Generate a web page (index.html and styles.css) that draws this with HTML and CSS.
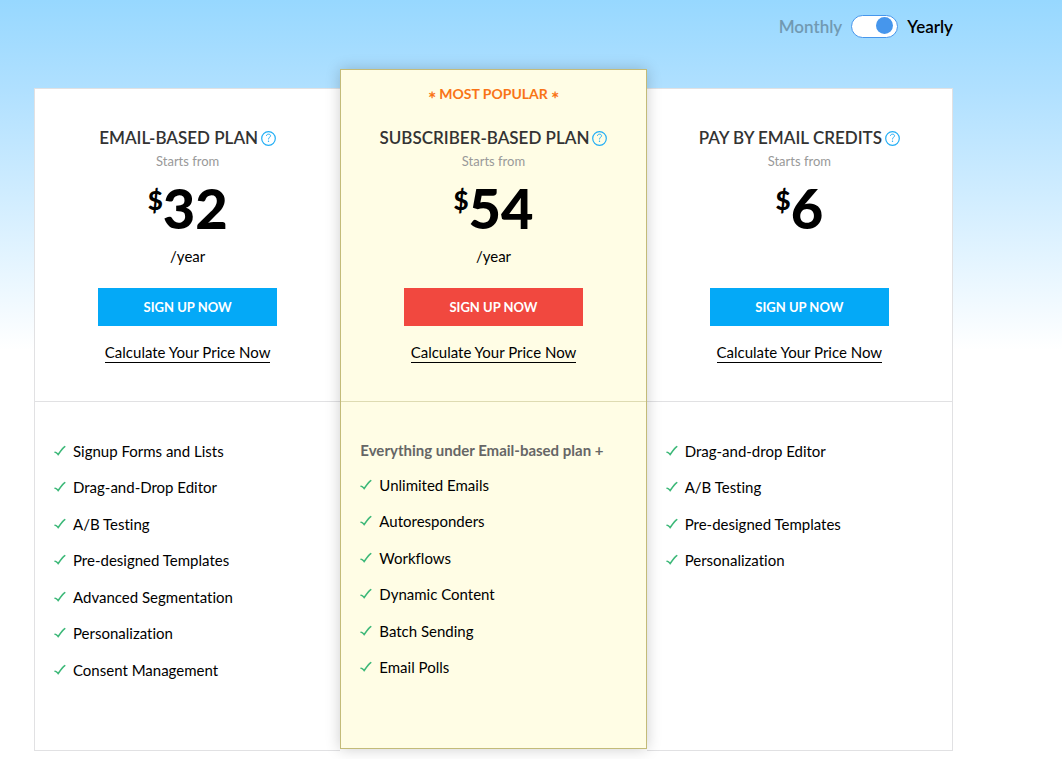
FILE: index.html
```html
<!DOCTYPE html>
<html lang="en">

<head>
    <meta charset="UTF-8">
    <meta name="viewport" content="width=device-width, initial-scale=1.0">
    <title>Pricing</title>
    <link rel="stylesheet" href="styles.css">
</head>

<body>
    <svg class="sprite" aria-hidden="true">
        <symbol id="check" viewBox="0 0 12 12">
            <path d="M1 7.2 C2.4 7.2 3.2 8.6 4.2 9.6 C6 7 8 3.6 10.8 1.6" fill="none" stroke="#3cb878" stroke-width="1.5" stroke-linecap="round" />
        </symbol>
        <symbol id="help" viewBox="0 0 15 15">
            <circle cx="7.5" cy="7.5" r="6.8" fill="none" stroke="#22aef5" stroke-width="1.2" />
            <path d="M5.4 4.8 C5.6 2.6 9.6 2.6 9.5 4.8 C9.4 6.3 7.5 6.4 7.5 8.4" fill="none" stroke="#22aef5" stroke-width="1" />
            <circle cx="7.5" cy="10.3" r="0.7" fill="#22aef5" />
        </symbol>
    </svg>

    <main class="pricing">
        <div class="billing">
            <label class="billing-off" for="billing-toggle">Monthly</label>
            <input class="toggle" type="checkbox" id="billing-toggle" checked>
            <label for="billing-toggle">Yearly</label>
        </div>

        <div class="plans">
            <section class="plan">
                <div class="plan-top">
                    <h2>EMAIL-BASED PLAN <svg class="help"><use href="#help" /></svg></h2>
                    <p class="starts">Starts from</p>
                    <p class="price"><span class="currency">$</span>32</p>
                    <p class="period">/year</p>
                    <button class="signup" type="button">SIGN UP NOW</button>
                    <a class="calculate" href="#">Calculate Your Price Now</a>
                </div>
                <div class="plan-features">
                    <ul>
                        <li><svg class="check"><use href="#check" /></svg>Signup Forms and Lists</li>
                        <li><svg class="check"><use href="#check" /></svg>Drag-and-Drop Editor</li>
                        <li><svg class="check"><use href="#check" /></svg>A/B Testing</li>
                        <li><svg class="check"><use href="#check" /></svg>Pre-designed Templates</li>
                        <li><svg class="check"><use href="#check" /></svg>Advanced Segmentation</li>
                        <li><svg class="check"><use href="#check" /></svg>Personalization</li>
                        <li><svg class="check"><use href="#check" /></svg>Consent Management</li>
                    </ul>
                </div>
            </section>

            <section class="plan popular">
                <div class="plan-top">
                    <p class="ribbon"><span class="star">∗</span> MOST POPULAR <span class="star">∗</span></p>
                    <h2>SUBSCRIBER-BASED PLAN <svg class="help"><use href="#help" /></svg></h2>
                    <p class="starts">Starts from</p>
                    <p class="price"><span class="currency">$</span>54</p>
                    <p class="period">/year</p>
                    <button class="signup" type="button">SIGN UP NOW</button>
                    <a class="calculate" href="#">Calculate Your Price Now</a>
                </div>
                <div class="plan-features">
                    <p class="everything">Everything under Email-based plan +</p>
                    <ul>
                        <li><svg class="check"><use href="#check" /></svg>Unlimited Emails</li>
                        <li><svg class="check"><use href="#check" /></svg>Autoresponders</li>
                        <li><svg class="check"><use href="#check" /></svg>Workflows</li>
                        <li><svg class="check"><use href="#check" /></svg>Dynamic Content</li>
                        <li><svg class="check"><use href="#check" /></svg>Batch Sending</li>
                        <li><svg class="check"><use href="#check" /></svg>Email Polls</li>
                    </ul>
                </div>
            </section>

            <section class="plan">
                <div class="plan-top">
                    <h2>PAY BY EMAIL CREDITS <svg class="help"><use href="#help" /></svg></h2>
                    <p class="starts">Starts from</p>
                    <p class="price"><span class="currency">$</span>6</p>
                    <p class="period"></p>
                    <button class="signup" type="button">SIGN UP NOW</button>
                    <a class="calculate" href="#">Calculate Your Price Now</a>
                </div>
                <div class="plan-features">
                    <ul>
                        <li><svg class="check"><use href="#check" /></svg>Drag-and-drop Editor</li>
                        <li><svg class="check"><use href="#check" /></svg>A/B Testing</li>
                        <li><svg class="check"><use href="#check" /></svg>Pre-designed Templates</li>
                        <li><svg class="check"><use href="#check" /></svg>Personalization</li>
                    </ul>
                </div>
            </section>
        </div>
    </main>
</body>

</html>
```
FILE: styles.css
```css
* {
    box-sizing: border-box;
}

body {
    margin: 0;
    font-family: Lato, "Liberation Sans", sans-serif;
    font-size: 15px;
    line-height: 20px;
    font-variant-ligatures: none;
    color: #000;
    background: #fff linear-gradient(#97d8ff 0, #b0e0ff 90px, #fff 350px) no-repeat;
}

h2,
p,
ul {
    margin: 0;
    padding: 0;
}

.sprite {
    display: none;
}

.pricing {
    padding: 15px 109px 8px 34px;
}

/* monthly / yearly switch */
.billing {
    display: flex;
    justify-content: flex-end;
    align-items: center;
    gap: 9px;
    margin-bottom: 50px;
    font-size: 17px;
    font-weight: 600;
}

.billing-off {
    color: #7199b2;
}

.toggle {
    appearance: none;
    display: flex;
    justify-content: flex-start;
    width: 47px;
    height: 23px;
    margin: 0;
    padding: 1px 4px;
    background: #fff;
    border: 1px solid #4696ec;
    border-radius: 12px;
    cursor: pointer;
}

.toggle::before {
    content: "";
    width: 17px;
    height: 17px;
    border-radius: 50%;
    background: #4696ec;
}

.toggle:checked {
    justify-content: flex-end;
}

/* plan columns */
.plans {
    display: grid;
    grid-template-columns: repeat(3, 1fr);
}

.plan {
    background: #fff;
    border: 1px solid #e1e1e3;
}

.plan:first-child {
    border-right: 0;
}

.plan:last-child {
    border-left: 0;
}

.popular {
    position: relative;
    margin: -19px 0 2px;
    background: #fffde5;
    border-color: #c3bb79;
    box-shadow: 0 0 14px rgba(0, 0, 0, 0.2);
}

.plan-top {
    display: flex;
    flex-direction: column;
    align-items: center;
    padding: 39px 0 38px;
    border-bottom: 1px solid #e1e1e3;
}

.popular .plan-top {
    padding-top: 15px;
    border-color: #dedbb2;
}

.ribbon {
    margin-bottom: 25px;
    font-size: 14px;
    font-weight: 700;
    line-height: 18px;
    color: #f97416;
}

.star {
    font-size: 10px;
    line-height: 10px;
    vertical-align: 1px;
}

h2 {
    display: flex;
    align-items: center;
    gap: 3px;
    font-size: 17px;
    font-weight: 600;
    line-height: 20px;
    color: #333;
}

.help {
    width: 15px;
    height: 15px;
}

.starts {
    margin-top: 4px;
    font-size: 13px;
    line-height: 18px;
    color: #999;
}

.price {
    display: flex;
    align-items: flex-start;
    margin-top: 6px;
    font-size: 56px;
    font-weight: 900;
    line-height: 64px;
}

.currency {
    font-size: 26px;
    line-height: 48px;
}

.period {
    min-height: 20px;
    margin-top: 6px;
}

.signup {
    width: 179px;
    height: 38px;
    margin-top: 22px;
    border: 0;
    background: #04a9f7;
    color: #fff;
    font-family: inherit;
    font-size: 13px;
    font-weight: 700;
    cursor: pointer;
}

.popular .signup {
    background: #f1483f;
}

.calculate {
    margin-top: 16px;
    border-bottom: 1px solid #000;
    color: #000;
    text-decoration: none;
}

/* feature lists */
.plan-features {
    padding: 39px 19px 70px;
}

.popular .plan-features {
    padding-top: 38px;
}

.everything {
    margin-bottom: 15px;
    font-size: 15px;
    font-weight: 700;
    color: #666;
}

li {
    display: flex;
    align-items: center;
    gap: 7px;
    margin-bottom: 16px;
}

li:nth-child(even) {
    margin-bottom: 17px;
}

li:last-child {
    margin-bottom: 0;
}

.check {
    width: 12px;
    height: 12px;
}
```
